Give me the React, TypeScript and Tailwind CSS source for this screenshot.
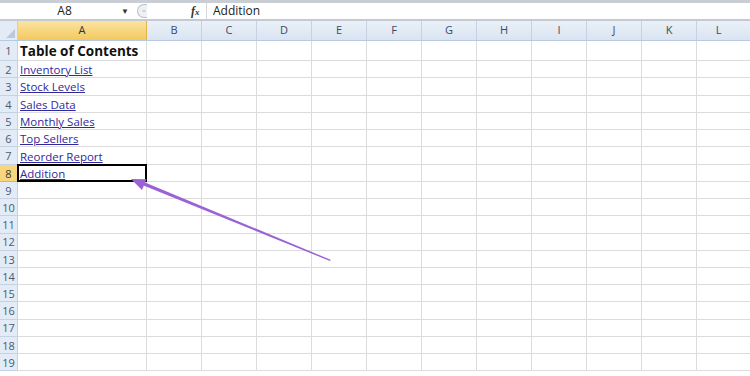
import React from "react";

const cols = ["B", "C", "D", "E", "F", "G", "H", "I", "J", "K"];
const links = ["Inventory List", "Stock Levels", "Sales Data", "Monthly Sales", "Top Sellers", "Reorder Report", "Addition"];

function Row({ n, children, h, selected }: { n: number; children?: React.ReactNode; h: string; selected?: boolean }) {
  return (
    <div className={`flex ${h}`}>
      <div
        className={`w-[18px] shrink-0 flex items-center justify-center pt-[2px] text-[11px] border-r border-b ${
          selected ? "bg-[#f7d67e] border-[#e0b44c] text-[#3b3b3b]" : "bg-[#e3ebf6] border-[#c5d2e3] text-[#4b5a70]"
        }`}
      >
        {n}
      </div>
      <div className="w-[129px] shrink-0 border-r border-b border-[#dcdcdc] relative flex items-center pt-[1px] pl-[2px] overflow-visible whitespace-nowrap">
        {children}
      </div>
      {cols.map((c) => (
        <div key={c} className="w-[55px] shrink-0 border-r border-b border-[#dcdcdc]" />
      ))}
      <div className="flex-1 border-b border-[#dcdcdc]" />
    </div>
  );
}

export default function App() {
  const rows = [];
  for (let i = 9; i <= 19; i++) rows.push(i);
  return (
    <div className="w-[750px] h-[376px] overflow-hidden bg-white relative" style={{ fontFamily: "'Open Sans', 'Liberation Sans', sans-serif" }}>
      <div className="h-[3px] bg-[#c9ced5]" />
      <div className="h-[18px] flex items-center border-b-2 border-[#c4cad2] bg-white">
        <div className="w-[137px] flex items-center relative h-full">
          <span className="flex-1 text-center text-[12px] text-[#222] pl-[8px]">A8</span>
          <span className="text-[8px] text-[#333] mr-[8px]">▼</span>
        </div>
        <div className="w-[10px] h-[14px] rounded-l-full border border-r-0 border-[#b9c0c9] bg-[#eef1f4] flex items-center justify-center">
          <span className="text-[6px] text-[#b5b5b5] ml-[3px]">=</span>
        </div>
        <div className="w-[44px]" />
        <span className="text-[12px] italic font-bold text-[#333] w-[12px]" style={{ fontFamily: "'Liberation Serif', serif" }}>
          f<span className="text-[9px]">x</span>
        </span>
        <div className="w-px h-full bg-[#d4d8de] ml-[3px]" />
        <span className="text-[12px] text-[#222] ml-[6px]">Addition</span>
      </div>
      <div className="h-[20px] flex border-b border-[#b8c8de]">
        <div className="w-[18px] shrink-0 bg-[#e3ebf6] border-r border-[#c5d2e3] relative">
          <div className="absolute right-[2px] bottom-[2px] w-0 h-0 border-l-[9px] border-l-transparent border-b-[9px] border-b-[#bcc9da]" />
        </div>
        <div className="w-[129px] shrink-0 bg-gradient-to-b from-[#fbe3a0] to-[#f4c95c] border-r border-[#e0b44c] flex items-center justify-center text-[11px] text-[#333]">A</div>
        {cols.map((c) => (
          <div key={c} className="w-[55px] shrink-0 bg-gradient-to-b from-[#eaf0f8] to-[#dae4f1] border-r border-[#c5d2e3] flex items-center justify-center text-[11px] text-[#3d4b60]">
            {c}
          </div>
        ))}
        <div className="flex-1 bg-gradient-to-b from-[#eaf0f8] to-[#dae4f1] flex items-center justify-center text-[11px] text-[#3d4b60] pr-[10px]">L</div>
      </div>
      <Row n={1} h="h-[20px]">
        <span className="text-[13.5px] font-bold text-[#111]">Table of Contents</span>
      </Row>
      {links.map((l, i) => (
        <Row key={l} n={i + 2} h="h-[17.3px]" selected={i === 6}>
          <span className="text-[11.5px] underline text-[#30299c]">{l}</span>
          {i === 6 && <div className="absolute -left-px -top-px -right-px -bottom-px border-2 border-black" />}
        </Row>
      ))}
      {rows.map((n) => (
        <Row key={n} n={n} h="h-[17.2px]" />
      ))}
      <svg className="absolute left-0 top-0 pointer-events-none" width="750" height="376">
        <polygon points="330,261 330.6,259.8 144.5,182.2 143.5,185.6" fill="#9b62d6" />
        <polygon points="131,179 146.5,179.3 142,190" fill="#9b62d6" />
      </svg>
    </div>
  );
}
